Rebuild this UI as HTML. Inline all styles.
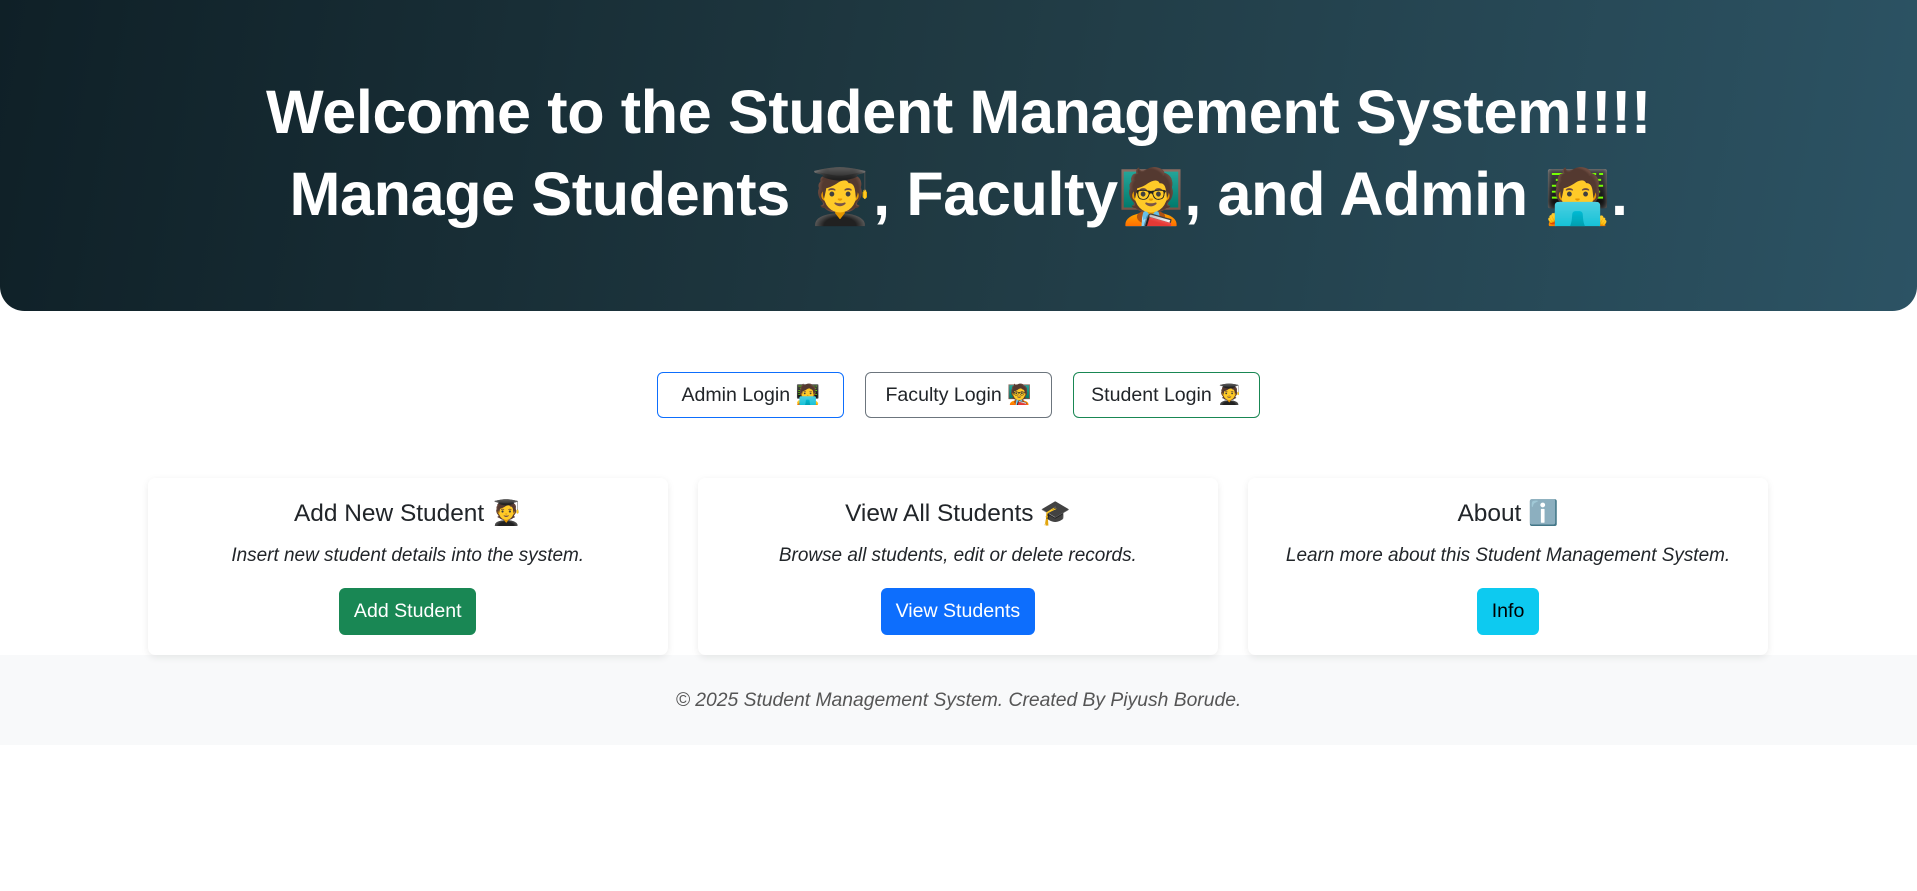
<!DOCTYPE html>
<html><head><meta charset="utf-8"><style>
html{zoom:1.2226}
*{box-sizing:border-box;margin:0;padding:0}
body{width:1568px;height:729px;font-family:"Liberation Sans","Noto Sans CJK JP",sans-serif;color:#212529;background:#fff;overflow:hidden;position:relative}
.hero{position:absolute;left:0;top:0;width:1568px;height:254px;border-radius:0 0 20px 20px;background:linear-gradient(100deg,#0f2027 0%,#203a43 50%,#2c5364 100%);color:#fff;text-align:center}
.hero h1{position:absolute;left:0;right:0;top:59px;font-size:50px;line-height:67px;font-weight:bold;letter-spacing:-0.3px}
.hero h1 .e{font-size:44px}
.logins{position:absolute;top:304px;left:0;right:0;display:flex;justify-content:center;gap:17px}
.lb{width:153px;height:38px;border:1px solid;border-radius:5px;font-size:16px;display:flex;align-items:center;justify-content:center;background:#fff}
.cards{position:absolute;top:391px;left:121px;display:flex;gap:25px;z-index:2}
.card{width:425px;height:145px;background:#fff;border-radius:6px;box-shadow:0 2px 6px rgba(0,0,0,.08);text-align:center;padding-top:17px}
.card h3{font-size:20px;font-weight:normal;line-height:24px}
.card p{font-style:italic;font-size:15.5px;margin-top:13px;line-height:20px}
.btn{display:inline-block;margin-top:16px;height:38px;line-height:38px;padding:0 12px;border-radius:5px;font-size:16px;color:#fff}
footer{position:absolute;top:536px;left:0;width:1568px;height:73px;background:#f8f9fa;text-align:center;line-height:76px;font-style:italic;color:#555;font-size:15.8px}
</style></head><body>
<div class="hero"><h1>Welcome to the Student Management System!!!!<br>Manage Students <span class="e">🧑‍🎓</span>, Faculty<span class="e">🧑‍🏫</span>, and Admin <span class="e">🧑‍💻</span>.</h1></div>
<div class="logins">
<div class="lb" style="border-color:#0d6efd">Admin Login 🧑‍💻</div>
<div class="lb" style="border-color:#6c757d">Faculty Login 🧑‍🏫</div>
<div class="lb" style="border-color:#198754">Student Login 🧑‍🎓</div>
</div>
<div class="cards">
<div class="card"><h3>Add New Student 🧑‍🎓</h3><p>Insert new student details into the system.</p><span class="btn" style="background:#198754">Add Student</span></div>
<div class="card"><h3>View All Students 🎓</h3><p>Browse all students, edit or delete records.</p><span class="btn" style="background:#0d6efd">View Students</span></div>
<div class="card"><h3>About ℹ️</h3><p>Learn more about this Student Management System.</p><span class="btn" style="background:#0dcaf0;color:#000">Info</span></div>
</div>
<footer>© 2025 Student Management System. Created By Piyush Borude.</footer>
</body></html>
